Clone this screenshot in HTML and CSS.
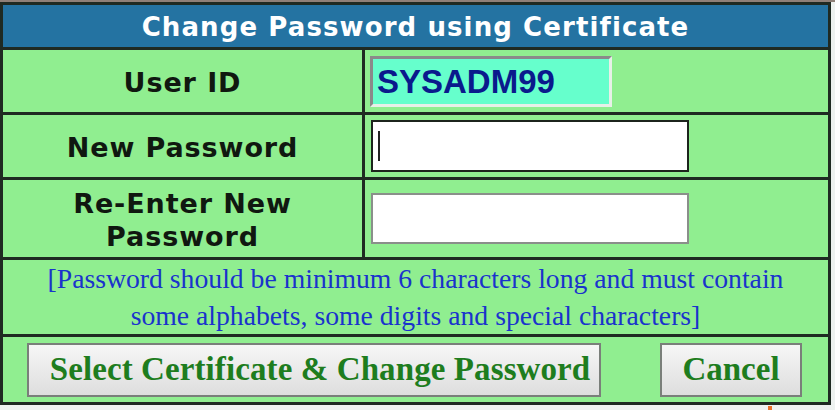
FILE: index.html
```html
<!DOCTYPE html>
<html>
<head>
<meta charset="utf-8">
<link rel="stylesheet" href="styles.css">
</head>
<body>
<div class="page">
  <div class="form">
    <div class="head">Change Password using Certificate</div>
    <div class="label">User ID</div>
    <div class="field"><div class="input userid">SYSADM99</div></div>
    <div class="label">New Password</div>
    <div class="field"><div class="input pwd focused"><span class="caret"></span></div></div>
    <div class="label">Re-Enter New<br>Password</div>
    <div class="field"><div class="input pwd"></div></div>
    <div class="note">[Password should be minimum 6 characters long and must contain<br>some alphabets, some digits and special characters]</div>
    <div class="actions">
      <button class="btn main">Select Certificate &amp; Change Password</button>
      <button class="btn cancel">Cancel</button>
    </div>
  </div>
  <div class="below"><span class="mark"></span></div>
</div>
</body>
</html>
```
FILE: styles.css
```css
html, body {
  margin: 0;
  padding: 0;
  background: #eef2f0;
}
.page {
  width: 835px;
  height: 410px;
  border-top: 2px solid #8f8078;
  box-sizing: border-box;
  overflow: hidden;
}
.form {
  width: 831px;
  box-sizing: border-box;
  border: 3px solid #1f2a22;
  background: #1f2a22;
  display: grid;
  grid-template-columns: 359px 1fr;
  grid-template-rows: 42px 62px 62px 77px 74px 65px;
  gap: 3px;
}
.head {
  grid-column: 1 / 3;
  background: #2473a2;
  color: #ffffff;
  font-family: "DejaVu Sans", Verdana, sans-serif;
  font-weight: bold;
  font-size: 26px;
  letter-spacing: 1.1px;
  display: flex;
  align-items: center;
  justify-content: center;
  padding-top: 2px;
}
.label {
  background: #90ee90;
  color: #101810;
  font-family: "DejaVu Sans", Verdana, sans-serif;
  font-weight: bold;
  font-size: 27px;
  letter-spacing: 0.9px;
  line-height: 33px;
  text-align: center;
  display: flex;
  align-items: center;
  justify-content: center;
  padding-top: 3px;
}
.field {
  background: #90ee90;
  display: flex;
  align-items: center;
  padding-left: 5px;
}
.input {
  box-sizing: border-box;
  height: 51px;
  background: #ffffff;
}
.userid {
  width: 242px;
  background: #66ffcc;
  border-top: 3px solid #8a8a8a;
  border-left: 3px solid #8a8a8a;
  border-right: 3px solid #e8f0e8;
  border-bottom: 3px solid #e8f0e8;
  color: #0a1a8c;
  font-family: "Liberation Sans", Arial, sans-serif;
  font-weight: bold;
  font-size: 33px;
  line-height: 45px;
  padding-left: 4px;
}
.pwd {
  margin-left: 1px;
  width: 318px;
  border: 2px solid #8a8f8a;
}
.focused {
  height: 52px;
  border-color: #1c241c;
  display: flex;
  align-items: center;
  padding-left: 5px;
}
.caret {
  width: 2px;
  height: 30px;
  background: #222;
}
.note {
  grid-column: 1 / 3;
  background: #90ee90;
  color: #1a33cc;
  font-family: "Liberation Serif", "Times New Roman", serif;
  font-size: 27.7px;
  line-height: 37px;
  text-align: center;
  display: flex;
  align-items: center;
  justify-content: center;
}
.actions {
  grid-column: 1 / 3;
  background: #90ee90;
  display: flex;
  align-items: center;
  padding-left: 24px;
  gap: 59px;
}
.btn {
  height: 54px;
  box-sizing: border-box;
  border: 2px solid #7a7f7a;
  background: linear-gradient(#f6f6f6, #dedede);
  color: #1e7d1e;
  font-family: "Liberation Serif", "Times New Roman", serif;
  font-weight: bold;
  font-size: 33px;
  padding: 0;
}
.main {
  width: 574px;
  padding-left: 12px;
  letter-spacing: 0.1px;
}
.cancel {
  width: 142px;
}
.below {
  position: relative;
  height: 10px;
}
.mark {
  position: absolute;
  left: 768px;
  top: 1px;
  width: 4px;
  height: 10px;
  background: #e8702a;
}
```
